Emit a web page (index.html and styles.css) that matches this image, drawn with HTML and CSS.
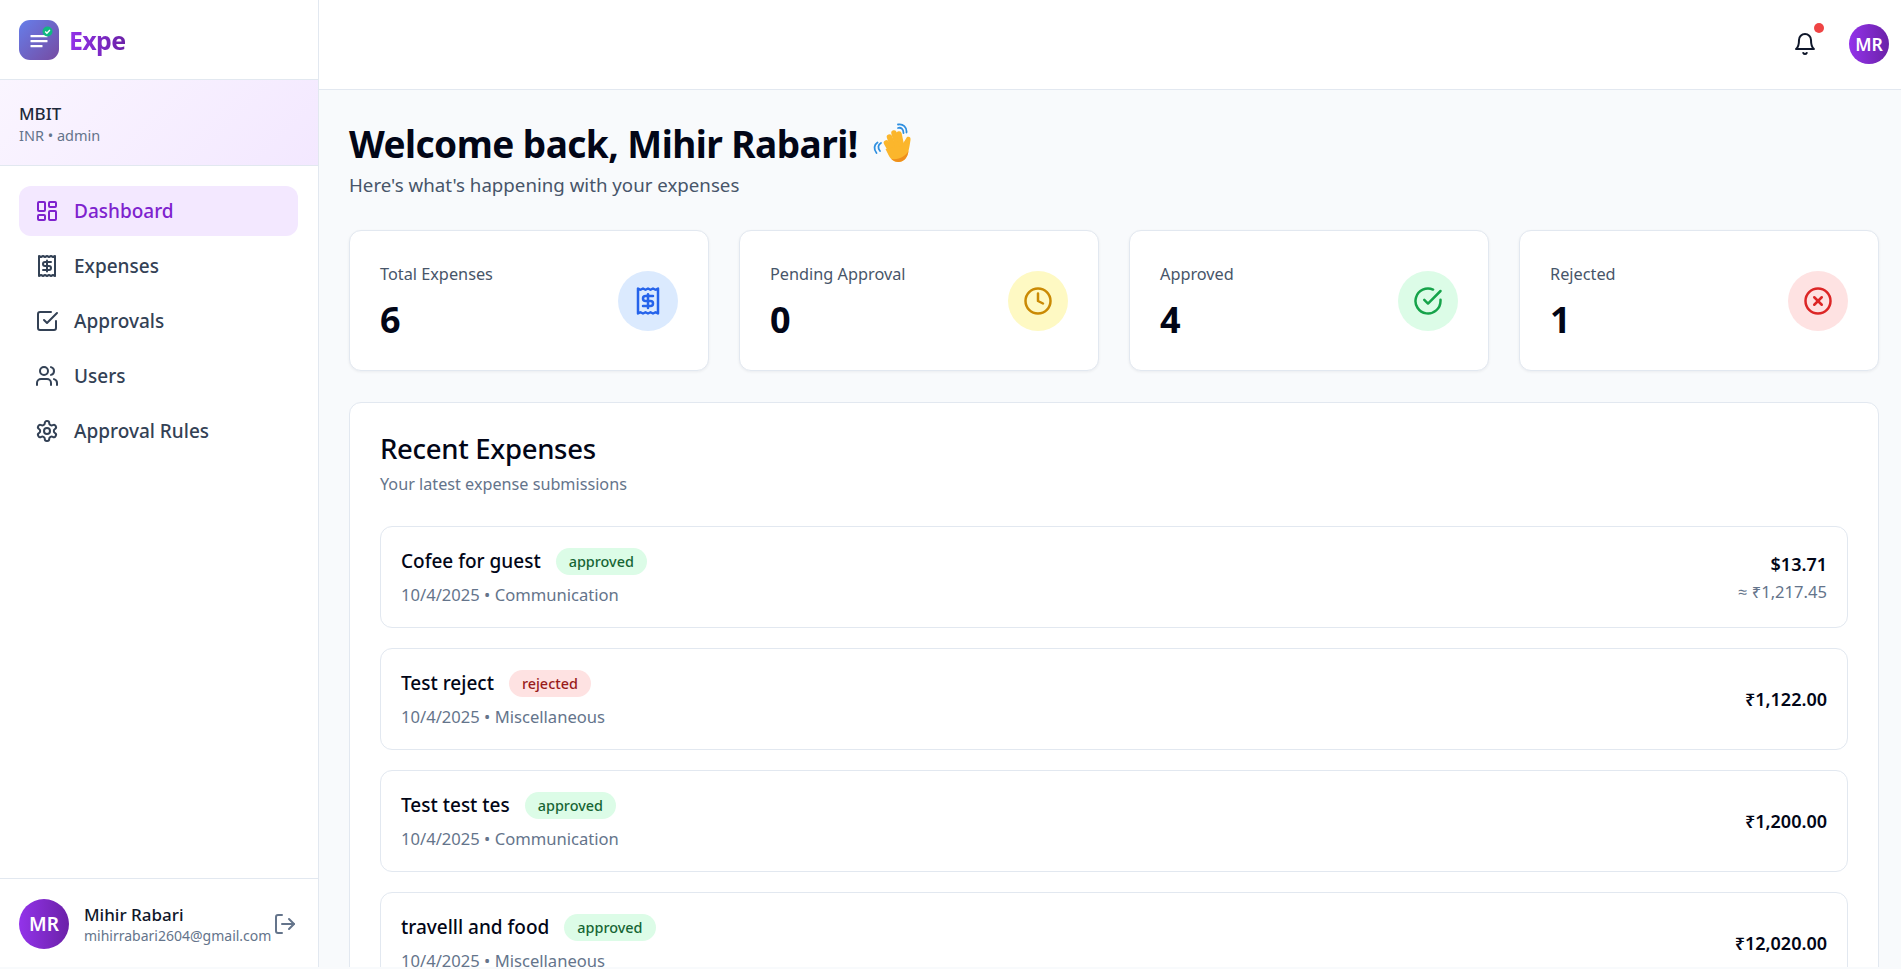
FILE: index.html
```html
<!DOCTYPE html>
<html lang="en">
<head>
    <meta charset="UTF-8">
    <meta name="viewport" content="width=device-width, initial-scale=1.0">
    <title>Expe - Dashboard</title>
    <link rel="stylesheet" href="styles.css">
</head>
<body>
    <div class="app">
        <aside class="sidebar">
            <div class="brand">
                <svg class="brand-logo" viewBox="0 0 40 40">
                    <defs>
                        <linearGradient id="logo-bg" x1="0" y1="0" x2="1" y2="1">
                            <stop offset="0" stop-color="#667eea"/>
                            <stop offset="1" stop-color="#764ba2"/>
                        </linearGradient>
                    </defs>
                    <rect width="40" height="40" rx="11" fill="url(#logo-bg)"/>
                    <g fill="#fff">
                        <rect x="11.500" y="15" width="17" height="2.200" rx="0.500"/>
                        <rect x="11.500" y="20" width="17" height="2.200" rx="0.500"/>
                        <rect x="11.500" y="25" width="12" height="2.200" rx="0.500"/>
                    </g>
                    <circle cx="28.500" cy="11.500" r="5" fill="#10b981"/>
                    <path d="M26.200 11.600l1.700 1.700 3-3.200" fill="none" stroke="#fff" stroke-width="1.400"/>
                </svg>
                <span class="brand-name">Expe</span>
            </div>
            <div class="org">
                <div class="org-name">MBIT</div>
                <div class="org-meta">INR • admin</div>
            </div>
            <nav class="nav">
                <a class="nav-item active" href="#">
                    <svg class="icon" viewBox="0 0 24 24"><rect x="3" y="3" width="7" height="9" rx="1"/><rect x="14" y="3" width="7" height="5" rx="1"/><rect x="14" y="12" width="7" height="9" rx="1"/><rect x="3" y="16" width="7" height="5" rx="1"/></svg>
                    Dashboard
                </a>
                <a class="nav-item" href="#">
                    <svg class="icon" viewBox="0 0 24 24"><path d="M4 2v20l2-1 2 1 2-1 2 1 2-1 2 1 2-1 2 1V2l-2 1-2-1-2 1-2-1-2 1-2-1-2 1Z"/><path d="M16 8h-6a2 2 0 1 0 0 4h4a2 2 0 1 1 0 4H8"/><path d="M12 17.500v-11"/></svg>
                    Expenses
                </a>
                <a class="nav-item" href="#">
                    <svg class="icon" viewBox="0 0 24 24"><path d="M9 11l3 3L22 4"/><path d="M21 12v7a2 2 0 0 1-2 2H5a2 2 0 0 1-2-2V5a2 2 0 0 1 2-2h11"/></svg>
                    Approvals
                </a>
                <a class="nav-item" href="#">
                    <svg class="icon" viewBox="0 0 24 24"><path d="M16 21v-2a4 4 0 0 0-4-4H6a4 4 0 0 0-4 4v2"/><circle cx="9" cy="7" r="4"/><path d="M22 21v-2a4 4 0 0 0-3-3.870"/><path d="M16 3.130a4 4 0 0 1 0 7.750"/></svg>
                    Users
                </a>
                <a class="nav-item" href="#">
                    <svg class="icon" viewBox="0 0 24 24"><path d="M12.220 2h-.44a2 2 0 0 0-2 2v.18a2 2 0 0 1-1 1.730l-.43.25a2 2 0 0 1-2 0l-.15-.08a2 2 0 0 0-2.730.73l-.22.38a2 2 0 0 0 .73 2.730l.15.1a2 2 0 0 1 1 1.720v.51a2 2 0 0 1-1 1.740l-.15.09a2 2 0 0 0-.73 2.730l.22.38a2 2 0 0 0 2.730.73l.15-.08a2 2 0 0 1 2 0l.43.25a2 2 0 0 1 1 1.730V20a2 2 0 0 0 2 2h.44a2 2 0 0 0 2-2v-.18a2 2 0 0 1 1-1.730l.43-.25a2 2 0 0 1 2 0l.15.08a2 2 0 0 0 2.730-.73l.22-.39a2 2 0 0 0-.73-2.730l-.15-.08a2 2 0 0 1-1-1.740v-.5a2 2 0 0 1 1-1.740l.15-.09a2 2 0 0 0 .73-2.730l-.22-.38a2 2 0 0 0-2.730-.73l-.15.08a2 2 0 0 1-2 0l-.43-.25a2 2 0 0 1-1-1.730V4a2 2 0 0 0-2-2z"/><circle cx="12" cy="12" r="3"/></svg>
                    Approval Rules
                </a>
            </nav>
            <div class="user">
                <div class="avatar avatar-lg">MR</div>
                <div class="user-info">
                    <div class="user-name">Mihir Rabari</div>
                    <div class="user-email">mihirrabari2604@gmail.com</div>
                </div>
                <svg class="icon logout" viewBox="0 0 24 24"><path d="M9 21H5a2 2 0 0 1-2-2V5a2 2 0 0 1 2-2h4"/><path d="M16 17l5-5-5-5"/><path d="M21 12H9"/></svg>
            </div>
        </aside>

        <div class="content">
            <header class="topbar">
                <div class="bell">
                    <svg class="icon" viewBox="0 0 24 24"><path d="M6 8a6 6 0 0 1 12 0c0 7 3 9 3 9H3s3-2 3-9"/><path d="M10.300 21a1.940 1.940 0 0 0 3.400 0"/></svg>
                    <span class="bell-dot"></span>
                </div>
                <div class="avatar">MR</div>
            </header>

            <main class="main">
                <h1 class="welcome">
                    Welcome back, Mihir Rabari!
                    <svg class="wave" viewBox="12 10 42 42">
                        <g fill="none" stroke="#2f8fe0" stroke-width="1.800" stroke-linecap="round">
                            <path d="M20 30c-3 1.500-3.500 5-1 8"/>
                            <path d="M16.500 29.500c-3.500 2-4 7-1 10.500"/>
                            <path d="M37 15c3-1 5.500 1 5.500 5"/>
                            <path d="M37 11.500c5-1 9 2.500 8.500 8"/>
                        </g>
                        <g stroke="#fbb62c" stroke-width="5.500" stroke-linecap="round" fill="none">
                            <path d="M30 38l-4.500-8"/>
                            <path d="M33 36l-4.500-12"/>
                            <path d="M37 35l-4-15"/>
                            <path d="M41 35l-3-14"/>
                        </g>
                        <path d="M46 24c2-1 4 0 3.500 3-.5 3-1 7-2 11-1 7-5 11-10 11s-8-3-10-7l-3-6 16-3z" fill="#fbb62c"/>
                        <path d="M47.500 38c-1 7-5 11-10 11-3 0-5-1-7-3 8 1 14-3 17-8z" fill="#ef8f1c"/>
                    </svg>
                </h1>
                <p class="welcome-sub">Here's what's happening with your expenses</p>

                <section class="stats">
                    <div class="stat-card">
                        <div>
                            <div class="stat-label">Total Expenses</div>
                            <div class="stat-value">6</div>
                        </div>
                        <div class="stat-icon blue">
                            <svg class="icon" viewBox="0 0 24 24"><path d="M4 2v20l2-1 2 1 2-1 2 1 2-1 2 1 2-1 2 1V2l-2 1-2-1-2 1-2-1-2 1-2-1-2 1Z"/><path d="M16 8h-6a2 2 0 1 0 0 4h4a2 2 0 1 1 0 4H8"/><path d="M12 17.500v-11"/></svg>
                        </div>
                    </div>
                    <div class="stat-card">
                        <div>
                            <div class="stat-label">Pending Approval</div>
                            <div class="stat-value">0</div>
                        </div>
                        <div class="stat-icon yellow">
                            <svg class="icon" viewBox="0 0 24 24"><circle cx="12" cy="12" r="10"/><path d="M12 6v6l4 2"/></svg>
                        </div>
                    </div>
                    <div class="stat-card">
                        <div>
                            <div class="stat-label">Approved</div>
                            <div class="stat-value">4</div>
                        </div>
                        <div class="stat-icon green">
                            <svg class="icon" viewBox="0 0 24 24"><path d="M22 11.080V12a10 10 0 1 1-5.930-9.140"/><path d="M22 4L12 14.010l-3-3"/></svg>
                        </div>
                    </div>
                    <div class="stat-card">
                        <div>
                            <div class="stat-label">Rejected</div>
                            <div class="stat-value">1</div>
                        </div>
                        <div class="stat-icon red">
                            <svg class="icon" viewBox="0 0 24 24"><circle cx="12" cy="12" r="10"/><path d="M15 9l-6 6"/><path d="M9 9l6 6"/></svg>
                        </div>
                    </div>
                </section>

                <section class="panel">
                    <h2 class="panel-title">Recent Expenses</h2>
                    <p class="panel-sub">Your latest expense submissions</p>
                    <div class="expense-list">
                        <div class="expense">
                            <div>
                                <div class="expense-head">
                                    <span class="expense-title">Cofee for guest</span>
                                    <span class="badge approved">approved</span>
                                </div>
                                <div class="expense-meta">10/4/2025 • Communication</div>
                            </div>
                            <div class="expense-amount">
                                <div class="amount">$13.71</div>
                                <div class="converted">≈ ₹1,217.45</div>
                            </div>
                        </div>
                        <div class="expense">
                            <div>
                                <div class="expense-head">
                                    <span class="expense-title">Test reject</span>
                                    <span class="badge rejected">rejected</span>
                                </div>
                                <div class="expense-meta">10/4/2025 • Miscellaneous</div>
                            </div>
                            <div class="expense-amount">
                                <div class="amount">₹1,122.00</div>
                            </div>
                        </div>
                        <div class="expense">
                            <div>
                                <div class="expense-head">
                                    <span class="expense-title">Test test tes</span>
                                    <span class="badge approved">approved</span>
                                </div>
                                <div class="expense-meta">10/4/2025 • Communication</div>
                            </div>
                            <div class="expense-amount">
                                <div class="amount">₹1,200.00</div>
                            </div>
                        </div>
                        <div class="expense">
                            <div>
                                <div class="expense-head">
                                    <span class="expense-title">travelll and food</span>
                                    <span class="badge approved">approved</span>
                                </div>
                                <div class="expense-meta">10/4/2025 • Miscellaneous</div>
                            </div>
                            <div class="expense-amount">
                                <div class="amount">₹12,020.00</div>
                            </div>
                        </div>
                    </div>
                </section>
            </main>
        </div>
    </div>
</body>
</html>
```

FILE: styles.css
```css
* {
    box-sizing: border-box;
}
html, body {
    height: 100%;
    margin: 0;
    overflow: hidden;
}
body {
    font-family: "Noto Sans", "Open Sans", Arial, sans-serif;
    background-color: #f8fafc;
    color: #0f172a;
}
.app {
    display: flex;
    height: calc(100vh - 2px);
}
.icon {
    width: 24px;
    height: 24px;
    flex-shrink: 0;
    fill: none;
    stroke: currentColor;
    stroke-width: 2;
    stroke-linecap: round;
    stroke-linejoin: round;
}

/* sidebar */
.sidebar {
    width: 319px;
    flex-shrink: 0;
    display: flex;
    flex-direction: column;
    background-color: #fff;
    border-right: 1px solid #e2e8f0;
}
.brand {
    height: 80px;
    padding: 0 19px;
    display: flex;
    align-items: center;
    gap: 10px;
    border-bottom: 1px solid #e2e8f0;
}
.brand-logo {
    width: 40px;
    height: 40px;
}
.brand-name {
    font-size: 25px;
    font-weight: 700;
    letter-spacing: -0.7px;
    background: linear-gradient(90deg, #9333ea, #6b21a8);
    -webkit-background-clip: text;
    background-clip: text;
    color: transparent;
}
.org {
    height: 86px;
    padding: 22px 19px 0;
    background: linear-gradient(135deg, #faf5ff, #f3e8ff);
    border-bottom: 1px solid #e2e8f0;
}
.org-name {
    font-size: 17px;
    line-height: 23px;
    font-weight: 500;
    color: #1e293b;
}
.org-meta {
    font-size: 14.5px;
    line-height: 20px;
    color: #64748b;
}
.nav {
    flex: 1;
    padding: 20px 20px 20px 19px;
    display: flex;
    flex-direction: column;
    gap: 5px;
}
.nav-item {
    height: 50px;
    padding: 0 16px;
    display: flex;
    align-items: center;
    gap: 15px;
    border-radius: 12px;
    font-size: 19px;
    font-weight: 500;
    color: #334155;
    text-decoration: none;
}
.nav-item.active {
    background-color: #f3e8ff;
    color: #7e22ce;
}
.user {
    height: 89px;
    padding: 2px 19px 0;
    display: flex;
    align-items: center;
    gap: 15px;
    position: relative;
    border-top: 1px solid #e2e8f0;
}
.user-name {
    font-size: 17px;
    line-height: 23px;
    font-weight: 500;
}
.user-email {
    font-size: 14px;
    line-height: 19px;
    color: #64748b;
}
.logout {
    position: absolute;
    right: 21px;
    top: 33px;
    color: #64748b;
}
.avatar {
    width: 40px;
    height: 40px;
    flex-shrink: 0;
    display: flex;
    align-items: center;
    justify-content: center;
    border-radius: 50%;
    background: linear-gradient(90deg, #9333ea, #6b21a8);
    color: #fff;
    font-size: 17.6px;
    font-weight: 600;
}
.avatar-lg {
    width: 50px;
    height: 50px;
    font-size: 19px;
}

/* top bar */
.content {
    flex: 1;
    min-width: 0;
    display: flex;
    flex-direction: column;
}
.topbar {
    height: 90px;
    flex-shrink: 0;
    padding: 0 12px 1px 0;
    display: flex;
    align-items: center;
    justify-content: flex-end;
    gap: 32px;
    background-color: #fff;
    border-bottom: 1px solid #e2e8f0;
}
.bell {
    position: relative;
    height: 24px;
    color: #0f172a;
}
.bell-dot {
    position: absolute;
    top: -9px;
    right: -7px;
    width: 10px;
    height: 10px;
    border-radius: 50%;
    background-color: #ef4444;
}

/* main */
.main {
    flex: 1;
    overflow: hidden;
    padding: 29px 22px 0 30px;
}
.welcome {
    margin: 0;
    display: flex;
    align-items: center;
    gap: 15px;
    font-size: 37px;
    line-height: 50px;
    font-weight: 700;
    letter-spacing: -0.54px;
    color: #020617;
}
.wave {
    width: 42px;
    height: 42px;
}
.welcome-sub {
    margin: 4px 0 0;
    font-size: 18.7px;
    line-height: 24px;
    color: #475569;
}
.stats {
    margin-top: 33px;
    display: grid;
    grid-template-columns: repeat(4, 1fr);
    gap: 30px;
}
.stat-card {
    height: 141px;
    padding: 0 30px;
    display: flex;
    align-items: center;
    justify-content: space-between;
    background-color: #fff;
    border: 1px solid #e2e8f0;
    border-radius: 12px;
    box-shadow: 0 1px 3px rgba(15, 23, 42, 0.06);
}
.stat-label {
    font-size: 16.3px;
    line-height: 22px;
    color: #475569;
}
.stat-value {
    margin-top: 16px;
    font-size: 36px;
    line-height: 38px;
    font-weight: 700;
    color: #020617;
}
.stat-icon {
    width: 60px;
    height: 60px;
    display: flex;
    align-items: center;
    justify-content: center;
    border-radius: 50%;
}
.stat-icon .icon {
    width: 30px;
    height: 30px;
}
.stat-icon.blue {
    background-color: #dbeafe;
    color: #2563eb;
}
.stat-icon.yellow {
    background-color: #fef9c3;
    color: #ca8a04;
}
.stat-icon.green {
    background-color: #dcfce7;
    color: #16a34a;
}
.stat-icon.red {
    background-color: #fee2e2;
    color: #dc2626;
}

/* recent expenses */
.panel {
    margin-top: 31px;
    padding: 28px 30px 30px;
    background-color: #fff;
    border: 1px solid #e2e8f0;
    border-radius: 12px;
}
.panel-title {
    margin: 0;
    font-size: 27.5px;
    line-height: 36px;
    font-weight: 500;
    letter-spacing: -0.3px;
    color: #020617;
}
.panel-sub {
    margin: 6px 0 0;
    font-size: 16.2px;
    line-height: 22px;
    color: #64748b;
}
.expense-list {
    margin-top: 31px;
    display: flex;
    flex-direction: column;
    gap: 20px;
}
.expense {
    height: 102px;
    padding: 0 20px;
    display: flex;
    align-items: center;
    justify-content: space-between;
    border: 1px solid #e2e8f0;
    border-radius: 12px;
}
.expense-head {
    display: flex;
    align-items: center;
    gap: 15px;
}
.expense-title {
    font-size: 19px;
    line-height: 27px;
    font-weight: 500;
    color: #020617;
}
.badge {
    height: 27px;
    padding: 0 13px;
    display: flex;
    align-items: center;
    border-radius: 14px;
    font-size: 14.4px;
    font-weight: 500;
}
.badge.approved {
    background-color: #dcfce7;
    color: #166534;
}
.badge.rejected {
    background-color: #fee2e2;
    color: #991b1b;
}
.expense-meta {
    margin-top: 9px;
    font-size: 16.6px;
    line-height: 22px;
    color: #64748b;
}
.expense-amount {
    text-align: right;
}
.amount {
    font-size: 18px;
    line-height: 26px;
    font-weight: 600;
    color: #020617;
}
.converted {
    margin-top: 4px;
    font-size: 16.6px;
    line-height: 22px;
    color: #64748b;
}
```
